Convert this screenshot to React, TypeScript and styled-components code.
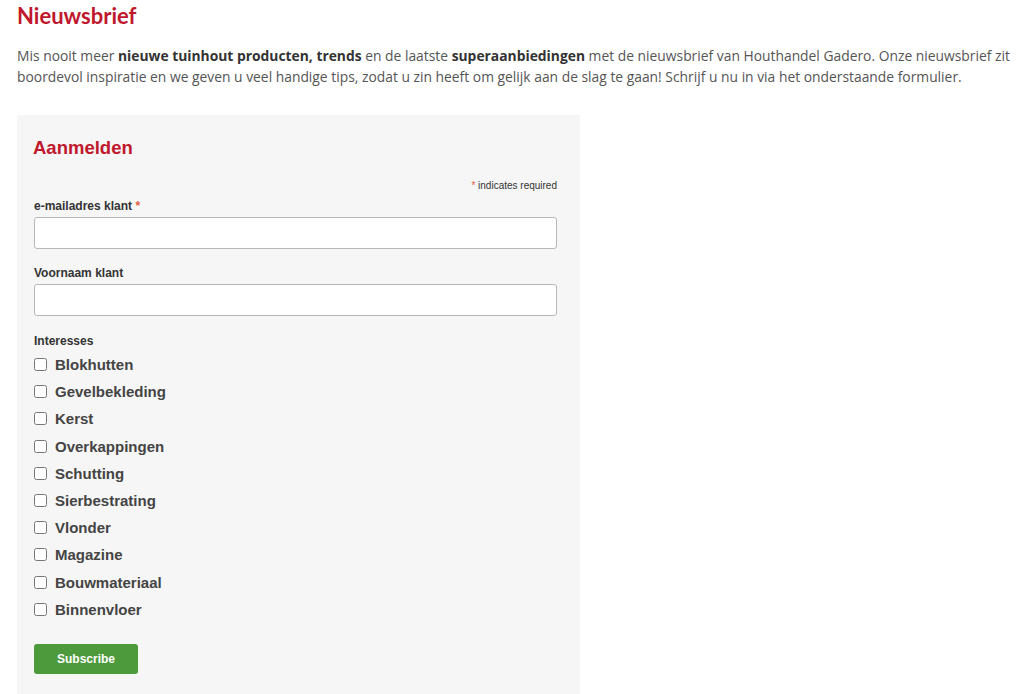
import React from 'react';
import styled, { createGlobalStyle } from 'styled-components';

const GlobalStyle = createGlobalStyle`
  html, body {
    margin: 0;
    padding: 0;
    background: #ffffff;
  }
`;

const Page = styled.div`
  padding: 3px 0 0 17px;
  font-family: 'Open Sans', Lato, sans-serif;
  color: #555;
`;

const Title = styled.h1`
  margin: 0;
  font-family: Lato, sans-serif;
  font-size: 22px;
  font-weight: 700;
  line-height: 26px;
  color: #c0182c;
`;

const Intro = styled.p`
  margin: 16px 0 0;
  width: 1007px;
  font-size: 13.85px;
  line-height: 21px;
  color: #555;

  b {
    font-weight: 700;
    color: #333;
  }
`;

const Panel = styled.div`
  margin-top: 28px;
  width: 563px;
  background: #f6f6f6;
  padding: 18px 23px 20px 16px;
  box-sizing: border-box;
  font-family: Arial, 'Liberation Sans', Helvetica, sans-serif;
  display: flex;
  flex-direction: column;
`;

const FormTitle = styled.h2`
  margin: 0;
  font-size: 18.5px;
  font-weight: 700;
  line-height: 30px;
  color: #c0182c;
`;

const Required = styled.div`
  margin-top: 16px;
  text-align: right;
  font-size: 10px;
  line-height: 14px;
  color: #333;
`;

const Star = styled.span`
  color: #e85c41;
`;

const Field = styled.div<{ $top: number }>`
  margin-top: ${p => p.$top}px;
  display: flex;
  flex-direction: column;
`;

const Label = styled.label`
  margin: 0 0 3px 1px;
  font-size: 12px;
  font-weight: 700;
  line-height: 16px;
  color: #333;
`;

const TextInput = styled.input`
  box-sizing: border-box;
  width: 523px;
  height: 32px;
  margin: 0 0 0 1px;
  border: 1px solid #b8b8b8;
  border-radius: 3px;
  background: #fff;
`;

const Options = styled.ul`
  list-style: none;
  margin: -1px 0 0;
  padding: 0;
  display: flex;
  flex-direction: column;
`;

const Option = styled.li`
  display: flex;
  align-items: center;
  height: 27.2px;
  font-size: 15px;
  font-weight: 700;
  color: #444;

  input {
    width: 13px;
    height: 13px;
    margin: 0 8px 0 1px;
  }
`;

const SubmitButton = styled.button`
  margin: 21px 0 0 1px;
  align-self: flex-start;
  width: 104px;
  height: 30px;
  border: none;
  border-radius: 3px;
  background: #4c9a3c;
  color: #fff;
  font-family: Arial, 'Liberation Sans', sans-serif;
  font-size: 12px;
  font-weight: 700;
  cursor: pointer;
`;

const interests = [
  'Blokhutten',
  'Gevelbekleding',
  'Kerst',
  'Overkappingen',
  'Schutting',
  'Sierbestrating',
  'Vlonder',
  'Magazine',
  'Bouwmateriaal',
  'Binnenvloer',
];

export default function App() {
  return (
    <>
      <GlobalStyle />
      <Page>
        <Title>Nieuwsbrief</Title>
        <Intro>
          Mis nooit meer <b>nieuwe tuinhout producten, trends</b> en de laatste{' '}
          <b>superaanbiedingen</b> met de nieuwsbrief van Houthandel Gadero. Onze nieuwsbrief zit
          <br />
          boordevol inspiratie en we geven u veel handige tips, zodat u zin heeft om gelijk aan de
          slag te gaan! Schrijf u nu in via het onderstaande formulier.
        </Intro>
        <Panel>
          <FormTitle>Aanmelden</FormTitle>
          <Required>
            <Star>*</Star> indicates required
          </Required>
          <Field $top={5}>
            <Label>
              e-mailadres klant <Star>*</Star>
            </Label>
            <TextInput type="email" />
          </Field>
          <Field $top={16}>
            <Label>Voornaam klant</Label>
            <TextInput type="text" />
          </Field>
          <Field $top={17}>
            <Label>Interesses</Label>
            <Options>
              {interests.map(name => (
                <Option key={name}>
                  <input type="checkbox" />
                  {name}
                </Option>
              ))}
            </Options>
          </Field>
          <SubmitButton>Subscribe</SubmitButton>
        </Panel>
      </Page>
    </>
  );
}
